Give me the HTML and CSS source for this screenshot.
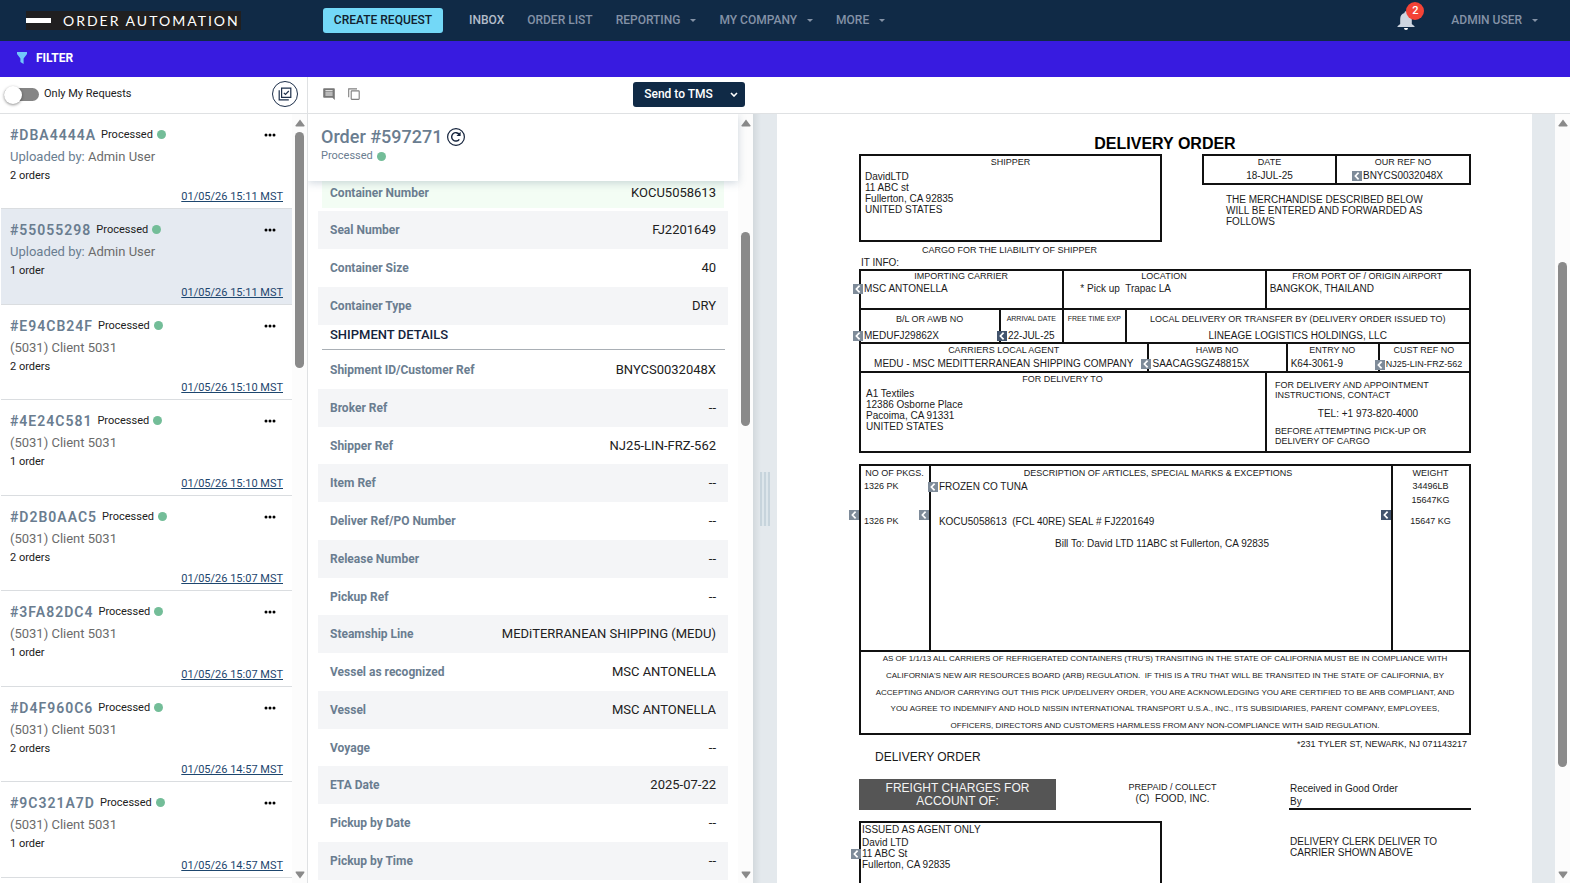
FILE: index.html
```html
<!DOCTYPE html>
<html lang="en">
<head>
<meta charset="utf-8">
<title>Order Automation</title>
<link rel="stylesheet" href="styles.css">
</head>
<body>
<svg class="defs" aria-hidden="true">
  <symbol id="i-flag" viewBox="0 0 10 10"><rect width="10" height="10" fill="currentColor"/><path d="M6.6 1.6 3.4 5l3.2 3.4" fill="none" stroke="#fff" stroke-width="1.7"/></symbol>
  <symbol id="i-dots" viewBox="0 0 12 4"><circle cx="2" cy="2" r="1.5"/><circle cx="6" cy="2" r="1.5"/><circle cx="10" cy="2" r="1.5"/></symbol>
  <symbol id="i-up" viewBox="0 0 10 8"><path d="M5 .5 9.3 6.2V7.5H.7V6.2z" fill="#8a8a8a"/></symbol>
  <symbol id="i-down" viewBox="0 0 10 8"><path d="M5 7.5 9.3 1.8V.5H.7v1.3z" fill="#8a8a8a"/></symbol>
  <symbol id="i-caret" viewBox="0 0 6 3"><path d="M0 0h6L3 3z" fill="currentColor"/></symbol>
</svg>

<header class="topbar">
  <div class="brand"><span class="brand-mark"></span><span class="brand-name">ORDER AUTOMATION</span></div>
  <button class="create" type="button">CREATE REQUEST</button>
  <nav class="nav">
    <a class="active" href="#">INBOX</a>
    <a href="#">ORDER LIST</a>
    <a href="#">REPORTING <svg class="caret"><use href="#i-caret"/></svg></a>
    <a href="#">MY COMPANY <svg class="caret"><use href="#i-caret"/></svg></a>
    <a href="#">MORE <svg class="caret"><use href="#i-caret"/></svg></a>
  </nav>
  <button class="bell" type="button" aria-label="Notifications">
    <svg class="bell-icon" viewBox="0 0 18 20"><path d="M9 1.2c.9 0 1.5.6 1.5 1.4v.5c2.700.7 4.300 3 4.300 5.800v5l2.700 2.300v.8H.5v-.8l2.700-2.300v-5c0-2.800 1.600-5.100 4.300-5.800v-.5c0-.8.6-1.400 1.500-1.400z" fill="#cfd6e0"/><path d="M7 18h4a2 2 0 0 1-4 0z" fill="#fff"/></svg>
    <span class="badge">2</span>
  </button>
  <a class="user" href="#">ADMIN USER <svg class="caret"><use href="#i-caret"/></svg></a>
</header>

<button class="filter" type="button"><svg class="funnel" viewBox="0 0 10 12"><path d="M0 0h10v2L6.600 6.500V12l-3.200-2V6.500L0 2z" fill="#72c8fa"/></svg>FILTER</button>

<div class="toolbar">
  <div class="tools-left">
    <label class="switch"><input type="checkbox"><span class="track"></span>Only My Requests</label>
    <button class="round" type="button" aria-label="Select all"><svg class="i14" viewBox="0 0 14 14" fill="none" stroke="#1d2f4a" stroke-width="1.200"><path d="M3.600 1.200h9.200v9.200H3.600z"/><path d="M1.200 3.200v9.600h9.600"/><path d="m5.800 5.800 1.700 1.700 3.300-3.500"/></svg></button>
  </div>
  <div class="tools-mid">
    <button class="plain" type="button" aria-label="Comments"><svg class="i12" viewBox="0 0 12 12"><path fill="#777" fill-rule="evenodd" d="M1 .3h10a.8.8 0 0 1 .8.8V12L9.500 9.700H1a.8.8 0 0 1-.8-.8V1.100A.8.8 0 0 1 1 .3zM2.400 2.200v1h7.200v-1zm0 2.200v1h7.200v-1zm0 2.200v1h7.200v-1z"/></svg></button>
    <button class="plain" type="button" aria-label="Copy"><svg class="i12" viewBox="0 0 12 12" fill="none" stroke="#808080" stroke-width="1.100"><rect x="3.200" y="2.900" width="8" height="8.500" rx=".6"/><path d="M.7 9.300V.9h8.300"/></svg></button>
    <div class="send"><button class="send-main" type="button">Send to TMS</button><button class="send-more" type="button" aria-label="More actions"><svg class="chev" viewBox="0 0 8 5"><path d="m1 1 3 3 3-3" fill="none" stroke="#fff" stroke-width="1.600"/></svg></button></div>
  </div>
</div>

<main class="main">
  <section class="requests">
    <ul class="cards">
      <li class="card"><div class="card-top"><b class="id">#DBA4444A</b><span>Processed</span><i class="dot"></i><button class="more" type="button" aria-label="More"><svg><use href="#i-dots"/></svg></button></div><p class="who"><span class="by">Uploaded by:</span> Admin User</p><p class="count">2 orders</p><a class="when" href="#">01/05/26 15:11 MST</a></li>
      <li class="card selected"><div class="card-top"><b class="id">#55055298</b><span>Processed</span><i class="dot"></i><button class="more" type="button" aria-label="More"><svg><use href="#i-dots"/></svg></button></div><p class="who"><span class="by">Uploaded by:</span> Admin User</p><p class="count">1 order</p><a class="when" href="#">01/05/26 15:11 MST</a></li>
      <li class="card"><div class="card-top"><b class="id">#E94CB24F</b><span>Processed</span><i class="dot"></i><button class="more" type="button" aria-label="More"><svg><use href="#i-dots"/></svg></button></div><p class="who">(5031) Client 5031</p><p class="count">2 orders</p><a class="when" href="#">01/05/26 15:10 MST</a></li>
      <li class="card"><div class="card-top"><b class="id">#4E24C581</b><span>Processed</span><i class="dot"></i><button class="more" type="button" aria-label="More"><svg><use href="#i-dots"/></svg></button></div><p class="who">(5031) Client 5031</p><p class="count">1 order</p><a class="when" href="#">01/05/26 15:10 MST</a></li>
      <li class="card"><div class="card-top"><b class="id">#D2B0AAC5</b><span>Processed</span><i class="dot"></i><button class="more" type="button" aria-label="More"><svg><use href="#i-dots"/></svg></button></div><p class="who">(5031) Client 5031</p><p class="count">2 orders</p><a class="when" href="#">01/05/26 15:07 MST</a></li>
      <li class="card"><div class="card-top"><b class="id">#3FA82DC4</b><span>Processed</span><i class="dot"></i><button class="more" type="button" aria-label="More"><svg><use href="#i-dots"/></svg></button></div><p class="who">(5031) Client 5031</p><p class="count">1 order</p><a class="when" href="#">01/05/26 15:07 MST</a></li>
      <li class="card"><div class="card-top"><b class="id">#D4F960C6</b><span>Processed</span><i class="dot"></i><button class="more" type="button" aria-label="More"><svg><use href="#i-dots"/></svg></button></div><p class="who">(5031) Client 5031</p><p class="count">2 orders</p><a class="when" href="#">01/05/26 14:57 MST</a></li>
      <li class="card"><div class="card-top"><b class="id">#9C321A7D</b><span>Processed</span><i class="dot"></i><button class="more" type="button" aria-label="More"><svg><use href="#i-dots"/></svg></button></div><p class="who">(5031) Client 5031</p><p class="count">1 order</p><a class="when" href="#">01/05/26 14:57 MST</a></li>
    </ul>
    <div class="scroll scroll-list"><svg class="arrow"><use href="#i-up"/></svg><div class="rail"><div class="thumb"></div></div><svg class="arrow"><use href="#i-down"/></svg></div>
  </section>

  <section class="details">
    <div class="detail-body">
      <div class="detail-head">
        <h1 class="order">Order #597271 <button class="reload" type="button" aria-label="Reprocess"><svg viewBox="0 0 18 18" fill="none" stroke="#14233c"><circle cx="9" cy="9" r="8.400" stroke-width="1.200"/><path d="M12.300 11.300A4.200 4.200 0 1 1 12.200 6.300" stroke-width="1.400"/><path d="M13.600 3.800v4.100H9.500z" fill="#14233c" stroke="none"/></svg></button></h1>
        <p class="state">Processed<i class="dot"></i></p>
      </div>
      <dl class="fields lead">
        <div class="match"><dt>Container Number</dt><dd>KOCU5058613</dd></div>
        <div><dt>Seal Number</dt><dd>FJ2201649</dd></div>
        <div><dt>Container Size</dt><dd>40</dd></div>
        <div><dt>Container Type</dt><dd>DRY</dd></div>
      </dl>
      <h2 class="group">SHIPMENT DETAILS</h2>
      <dl class="fields">
        <div><dt>Shipment ID/Customer Ref</dt><dd>BNYCS0032048X</dd></div>
        <div><dt>Broker Ref</dt><dd>--</dd></div>
        <div><dt>Shipper Ref</dt><dd>NJ25-LIN-FRZ-562</dd></div>
        <div><dt>Item Ref</dt><dd>--</dd></div>
        <div><dt>Deliver Ref/PO Number</dt><dd>--</dd></div>
        <div><dt>Release Number</dt><dd>--</dd></div>
        <div><dt>Pickup Ref</dt><dd>--</dd></div>
        <div><dt>Steamship Line</dt><dd>MEDiTERRANEAN SHIPPING (MEDU)</dd></div>
        <div><dt>Vessel as recognized</dt><dd>MSC ANTONELLA</dd></div>
        <div><dt>Vessel</dt><dd>MSC ANTONELLA</dd></div>
        <div><dt>Voyage</dt><dd>--</dd></div>
        <div><dt>ETA Date</dt><dd>2025-07-22</dd></div>
        <div><dt>Pickup by Date</dt><dd>--</dd></div>
        <div><dt>Pickup by Time</dt><dd>--</dd></div>
      </dl>
    </div>
    <div class="scroll scroll-detail"><svg class="arrow"><use href="#i-up"/></svg><div class="rail"><div class="thumb"></div></div><svg class="arrow"><use href="#i-down"/></svg></div>
  </section>

  <div class="splitter"><span class="grip"></span></div>

  <section class="viewer">
    <article class="sheet">
      <h2 class="sheet-title">DELIVERY ORDER</h2>
      <div class="intro">
        <div class="box shipper"><p class="lab">SHIPPER</p><p class="addr">DavidLTD<br>11 ABC st<br>Fullerton, CA 92835<br>UNITED STATES</p></div>
        <div class="intro-right">
          <div class="box refs">
            <div class="cell mid"><p class="lab">DATE</p><p class="val">18-JUL-25</p></div>
            <div class="cell mid"><p class="lab">OUR REF NO</p><p class="val"><span class="tag"><svg class="flag"><use href="#i-flag"/></svg>BNYCS0032048X</span></p></div>
          </div>
          <p class="notice">THE MERCHANDISE DESCRIBED BELOW<br>WILL BE ENTERED AND FORWARDED AS<br>FOLLOWS</p>
        </div>
      </div>
      <p class="lab liability">CARGO FOR THE LIABILITY OF SHIPPER</p>
      <p class="itinfo">IT INFO:</p>

      <div class="box">
        <div class="band band-1">
          <div class="cell"><p class="lab">IMPORTING CARRIER</p><p class="val"><span class="tag"><svg class="flag"><use href="#i-flag"/></svg>MSC ANTONELLA</span></p></div>
          <div class="cell"><p class="lab">LOCATION</p><p class="val inset">* Pick up&nbsp; Trapac LA</p></div>
          <div class="cell"><p class="lab">FROM PORT OF / ORIGIN AIRPORT</p><p class="val">BANGKOK, THAILAND</p></div>
        </div>
        <div class="band band-2">
          <div class="cell"><p class="lab">B/L OR AWB NO</p><p class="val"><span class="tag"><svg class="flag"><use href="#i-flag"/></svg>MEDUFJ29862X</span></p></div>
          <div class="cell mid"><p class="lab tiny">ARRIVAL DATE</p><p class="val"><span class="tag dark"><svg class="flag"><use href="#i-flag"/></svg>22-JUL-25</span></p></div>
          <div class="cell"><p class="lab tiny">FREE TIME EXP</p></div>
          <div class="cell mid"><p class="lab">LOCAL DELIVERY OR TRANSFER BY (DELIVERY ORDER ISSUED TO)</p><p class="val">LINEAGE LOGISTICS HOLDINGS, LLC</p></div>
        </div>
        <div class="band band-3">
          <div class="cell mid"><p class="lab">CARRIERS LOCAL AGENT</p><p class="val">MEDU - MSC MEDITTERRANEAN SHIPPING COMPANY</p></div>
          <div class="cell"><p class="lab">HAWB NO</p><p class="val"><span class="tag"><svg class="flag"><use href="#i-flag"/></svg>SAACAGSGZ48815X</span></p></div>
          <div class="cell"><p class="lab">ENTRY NO</p><p class="val">K64-3061-9</p></div>
          <div class="cell"><p class="lab">CUST REF NO</p><p class="val small pad"><span class="tag"><svg class="flag"><use href="#i-flag"/></svg>NJ25-LIN-FRZ-562</span></p></div>
        </div>
        <div class="band band-4">
          <div class="cell"><p class="lab">FOR DELIVERY TO</p><p class="addr">A1 Textiles<br>12386 Osborne Place<br>Pacoima, CA 91331<br>UNITED STATES</p></div>
          <div class="cell contact"><p>FOR DELIVERY AND APPOINTMENT INSTRUCTIONS, CONTACT</p><p class="tel">TEL: +1 973-820-4000</p><p>BEFORE ATTEMPTING PICK-UP OR DELIVERY OF CARGO</p></div>
        </div>
      </div>

      <div class="box goods">
        <div class="band band-5">
          <div class="cell"><p class="lab">NO OF PKGS.</p><p class="line-a small">1326 PK</p><p class="line-b small">1326 PK</p><svg class="flag at-left"><use href="#i-flag"/></svg><svg class="flag at-right"><use href="#i-flag"/></svg></div>
          <div class="cell desc"><p class="lab">DESCRIPTION OF ARTICLES, SPECIAL MARKS &amp; EXCEPTIONS</p><p class="line-a"><span class="tag"><svg class="flag"><use href="#i-flag"/></svg>FROZEN CO TUNA</span></p><p class="line-b">KOCU5058613&nbsp; (FCL 40RE) SEAL # FJ2201649</p><p class="bill">Bill To: David LTD 11ABC st Fullerton, CA 92835</p><svg class="flag at-right dark"><use href="#i-flag"/></svg></div>
          <div class="cell mid"><p class="lab">WEIGHT</p><p class="line-a small">34496LB</p><p class="small">15647KG</p><p class="line-c small">15647 KG</p></div>
        </div>
        <div class="terms">
          <p>AS OF 1/1/13 ALL CARRIERS OF REFRIGERATED CONTAINERS (TRU'S) TRANSITING IN THE STATE OF CALIFORNIA MUST BE IN COMPLIANCE WITH</p>
          <p>CALIFORNIA'S NEW AIR RESOURCES BOARD (ARB) REGULATION.&nbsp; IF THIS IS A TRU THAT WILL BE TRANSITED IN THE STATE OF CALIFORNIA, BY</p>
          <p>ACCEPTING AND/OR CARRYING OUT THIS PICK UP/DELIVERY ORDER, YOU ARE ACKNOWLEDGING YOU ARE CERTIFIED TO BE ARB COMPLIANT, AND</p>
          <p>YOU AGREE TO INDEMNIFY AND HOLD NISSIN INTERNATIONAL TRANSPORT U.S.A., INC., ITS SUBSIDIARIES, PARENT COMPANY, EMPLOYEES,</p>
          <p>OFFICERS, DIRECTORS AND CUSTOMERS HARMLESS FROM ANY NON-COMPLIANCE WITH SAID REGULATION.</p>
        </div>
      </div>
      <p class="newark">*231 TYLER ST, NEWARK, NJ 071143217</p>

      <p class="again">DELIVERY ORDER</p>
      <div class="charges">
        <p class="freight">FREIGHT CHARGES FOR<br>ACCOUNT OF:</p>
        <div class="prepaid"><p class="lab">PREPAID / COLLECT</p><p class="val">(C)&nbsp; FOOD, INC.</p></div>
        <p class="received">Received in Good Order<br>By</p>
      </div>
      <div class="closing">
        <div class="box agent"><p class="val">ISSUED AS AGENT ONLY</p><p>David LTD<br><span class="tag"><svg class="flag"><use href="#i-flag"/></svg>11 ABC St</span><br>Fullerton, CA 92835</p></div>
        <p class="clerk">DELIVERY CLERK DELIVER TO CARRIER SHOWN ABOVE</p>
      </div>
    </article>
    <div class="scroll scroll-view"><svg class="arrow"><use href="#i-up"/></svg><div class="rail"><div class="thumb"></div></div><svg class="arrow"><use href="#i-down"/></svg></div>
  </section>
</main>
</body>
</html>
```
FILE: styles.css
```css
* { box-sizing: border-box; }
body { margin: 0; height: 100vh; display: flex; flex-direction: column; overflow: hidden; background: #fff; font: 12px/16px Roboto, "Liberation Sans", sans-serif; color: #212121; }
p, h1, h2, ul, dl, dd { margin: 0; padding: 0; }
ul { list-style: none; }
button { font: inherit; color: inherit; border: 0; padding: 0; background: none; }
a { color: inherit; text-decoration: none; }
svg { display: block; flex: none; }
.defs { position: absolute; width: 0; height: 0; }

/* Top bar */
.topbar { display: flex; align-items: center; height: 41px; flex: none; background: #102a46; color: #8492a6; font-weight: 500; padding: 0 32px 1px 0; }
.brand { display: flex; align-items: center; gap: 12px; height: 19px; margin-left: 26px; width: 215px; background: #201f20; color: #fff; font-weight: 400; }
.brand-mark { width: 25px; height: 5px; background: #fff; }
.brand-name { font: 14px/19px Lato, sans-serif; letter-spacing: 2px; }
.create { width: 120px; height: 25px; margin-left: 82px; border-radius: 3px; background: #73d8f7; color: #10202e; font-weight: 500; }
.nav { display: flex; gap: 23px; margin-left: 26px; }
.nav a, .user { display: flex; align-items: center; gap: 10px; }
.nav .active { color: #b3bdca; }
.caret { width: 6px; height: 3px; }
.bell { position: relative; margin-left: auto; color: #fff; }
.bell-icon { width: 18px; height: 20px; }
.badge { position: absolute; left: 9px; top: -8px; width: 18px; height: 18px; border-radius: 9px; background: #f44336; font-size: 11px; line-height: 18px; text-align: center; }
.user { margin-left: 36px; }

.filter { display: flex; align-items: center; gap: 9px; height: 36px; flex: none; padding: 0 0 3px 17px; background: #381be0; color: #fff; font-size: 12px; font-weight: 700; }
.funnel { width: 10px; height: 12px; }

/* Tool row */
.toolbar { display: flex; height: 37px; flex: none; border-bottom: 1px solid #dfe1e3; }
.tools-left { display: flex; align-items: center; width: 308px; padding: 0 9px 2px 4px; border-right: 1px solid #dfe1e3; justify-content: space-between; }
.switch { display: flex; align-items: center; gap: 5px; font-size: 11px; }
.switch input { position: absolute; opacity: 0; }
.track { position: relative; width: 35px; height: 13px; border-radius: 7px; background: #858585; }
.track::before { content: ""; position: absolute; left: 0; top: -2px; width: 18px; height: 18px; border-radius: 9px; background: #fff; box-shadow: 0 1px 3px rgba(0, 0, 0, .45); }
.round { display: grid; place-items: center; width: 26px; height: 26px; border: 1px solid #1d2f4a; border-radius: 13px; }
.i14 { width: 14px; height: 14px; }
.i12 { width: 12px; height: 12px; }
.tools-mid { display: flex; align-items: center; gap: 13px; width: 437px; padding: 0 0 2px 15px; }
.send { display: flex; align-items: center; width: 112px; height: 25px; margin-left: auto; border-radius: 3px; background: #102a46; color: #fff; font-weight: 500; }
.send-main { flex: 1; }
.send-more { width: 21px; }
.chev { width: 8px; height: 5px; margin-left: 6px; }

.main { display: flex; flex: 1; min-height: 0; }

/* Scroll rails */
.scroll { display: flex; flex-direction: column; align-items: center; width: 15px; flex: none; padding: 5px 0 4px; background: #fcfcfc; }
.arrow { width: 10px; height: 8px; }
.rail { flex: 1; width: 9px; padding-top: 5px; }
.thumb { border-radius: 5px; background: #8a8a8a; }
.scroll-list .thumb { height: 236px; }
.scroll-detail .rail { padding-top: 105px; }
.scroll-detail .thumb { height: 194px; }
.scroll-view .rail { padding-top: 135px; }
.scroll-view .thumb { height: 505px; }

/* Request list */
.requests { display: flex; width: 308px; flex: none; border-right: 1px solid #dfe1e3; overflow: hidden; }
.cards { flex: 1; padding-left: 1px; }
.card { padding: 12px 9px 4px; border-bottom: 1px solid #dadde0; display: flex; flex-direction: column; height: 95px; font-size: 11px; }
.card:nth-child(even) { height: 96px; }
.selected { background: #e5eaf1; }
.card-top { display: flex; align-items: center; height: 17px; }
.id { font-size: 14px; font-weight: 600; letter-spacing: 1px; color: #6a7d90; margin-right: 5px; }
.dot { width: 9px; height: 9px; border-radius: 5px; background: #73bd98; margin-left: 4px; }
.more { margin-left: auto; margin-right: 7px; }
.more svg { width: 12px; height: 4px; }
.who { margin-top: 6px; font-size: 13px; color: #6b6b6b; }
.by { color: #6a7d90; }
.count { margin-top: 3px; }
.when { margin-top: auto; align-self: flex-end; color: #1d466e; line-height: 15px; text-decoration: underline; }

/* Order details */
.details { display: flex; width: 445px; flex: none; overflow: hidden; }
.detail-body { flex: 1; }
.detail-head { position: relative; height: 67px; padding: 12px 13px 0; background: #fff; box-shadow: 0 2px 8px rgba(100, 125, 150, .3); color: #6a7d90; }
.order { display: flex; align-items: center; gap: 5px; font-size: 18px; line-height: 22px; font-weight: 500; }
.reload svg { width: 18px; height: 18px; }
.state { display: flex; align-items: center; font-size: 11px; }
.fields { padding: 0 10px; font-size: 13px; }
.fields div { display: flex; justify-content: space-between; align-items: center; height: 38px; padding: 0 12px; }
.fields div:nth-child(4n+3) { height: 37px; }
.lead div:nth-child(n) { height: 38px; }
.fields div:nth-child(even) { background: #f4f5f7; }
.fields dt { font-size: 12px; font-weight: 700; color: #6a7d90; }
.lead div.match { height: 27px; padding: 0 8px 4px; margin: 0 4px 3px; background: #f3fdf4; }
.group { margin: 0 13px 1px 14px; padding: 2px 8px 6px; border-bottom: 1px solid #a9afb5; font-size: 13px; font-weight: 500; line-height: 16px; color: #14233c; }

.splitter { display: grid; place-items: center; width: 24px; flex: none; background: linear-gradient(90deg, #d3d9dd, #e4e9ed 8px); }
.grip { width: 10px; height: 54px; background: linear-gradient(90deg, #c7d4dc 2px, #dde6eb 2px 4px, #c7d4dc 4px 6px, #dde6eb 6px 8px, #c7d4dc 8px); }

/* Document */
.viewer { display: flex; flex: 1; min-width: 0; overflow: hidden; background: #e4e9ed; }
.scroll-view { margin-left: 23px; }
.sheet { flex: 1; min-width: 0; padding: 20px 61px 0 82px; background: #fff; color: #1a1a1a; font: 10px/11px "Liberation Sans", Arial, sans-serif; }
.sheet-title { font-size: 16px; line-height: 20px; text-align: center; color: #000; }
.box { border: 2px solid #111; }
.lab { font-size: 9px; line-height: 10px; text-align: center; }
.val { line-height: 14px; }
.small { font-size: 9px; }
.tiny { font-size: 7px; white-space: nowrap; }
.mid { text-align: center; }
.intro { display: flex; justify-content: space-between; align-items: flex-start; }
.shipper { flex: 0 1 303px; height: 88px; padding-top: 1px; }
.intro-right { flex: 0 1 269px; }
.refs { display: grid; grid-template-columns: 132fr 135fr; height: 31px; padding-top: 2px; }
.refs .val { line-height: 17px; }
.refs .cell { margin-top: -2px; padding-top: 1px; }
.cell { position: relative; min-width: 0; }
.cell + .cell { border-left: 2px solid #111; }
.addr { padding: 4px 0 0 4px; }
.notice { padding: 9px 0 0 24px; white-space: nowrap; }
.liability { margin: 3px 0 0; padding-right: 311px; }
.itinfo { padding: 2px 2px 1px; }
.band { display: grid; border-bottom: 2px solid #111; }
.band:last-child { border-bottom: 0; }
.band .cell { padding-left: 3px; padding-right: 4px; white-space: nowrap; }
.band-1 { grid-template-columns: 202fr 203fr 205fr; height: 39px; }
.band-1 .val { padding-top: 1px; }
.band-2 { grid-template-columns: 138fr 63fr 63fr 343fr; height: 34px; }
.band-2 .lab { padding-top: 4px; height: 19px; }
.band-3 { grid-template-columns: 286fr 138fr 92fr 91fr; height: 29px; }
.band-3 .lab { padding-top: 1px; height: 13px; }
.band-4 { grid-template-columns: 404fr 204fr; height: 78px; }
.band-4 .cell { padding-top: 1px; }
.band .addr { padding-left: 2px; }
.inset { padding-left: 13px; }
.pad { padding-left: 3px; }
.band .contact { padding: 7px 8px 0; font-size: 9px; line-height: 10px; white-space: normal; }
.contact .tel { padding: 8px 0 7px; font-size: 10px; line-height: 11px; text-align: center; }
.tag { position: relative; }
.flag { width: 10px; height: 10px; color: #7e8b99; }
.dark, .dark .flag { color: #43546d; }
.tag.dark { color: inherit; }
.tag .flag { position: absolute; right: 100%; top: 1px; margin-right: 1px; }
.goods { margin-top: 11px; }
.band-5 { grid-template-columns: 68fr 463fr 78fr; height: 186px; border-bottom: 2px solid #111; }
.band-5 .lab { padding-top: 2px; height: 15px; }
.band-5 .line-a { height: 14px; }
.band-5 .line-b { padding-top: 21px; }
.band-5 .line-c { padding-top: 10px; }
.band .desc { padding-left: 8px; padding-right: 14px; }
.bill { padding: 11px 0 0 8px; text-align: center; }
.at-left { position: absolute; right: 100%; top: 44px; margin-right: 2px; }
.at-right { position: absolute; right: 0; top: 44px; }
.terms { display: flex; flex-direction: column; justify-content: space-between; height: 81px; padding: 2px 0; font-size: 8px; line-height: 10px; text-align: center; white-space: nowrap; }
.newark { padding: 4px 4px 0; font-size: 9px; line-height: 11px; text-align: right; }
.again { padding: 0 0 0 16px; font-size: 12px; line-height: 14px; }
.charges { display: flex; justify-content: space-between; padding-top: 15px; }
.freight { flex: 0 1 197px; height: 31px; padding-top: 3px; background: #555; color: #f4f4f4; font-size: 12px; line-height: 13px; text-align: center; }
.prepaid { padding: 3px 0 0; text-align: center; }
.received { flex: 0 1 182px; padding: 3px 1px 0; line-height: 13px; border-bottom: 2px solid #111; }
.closing { display: flex; justify-content: space-between; padding-top: 11px; }
.agent { flex: 0 1 303px; height: 90px; padding-left: 1px; }
.clerk { flex: 0 1 182px; padding: 15px 1px 0; }
```
